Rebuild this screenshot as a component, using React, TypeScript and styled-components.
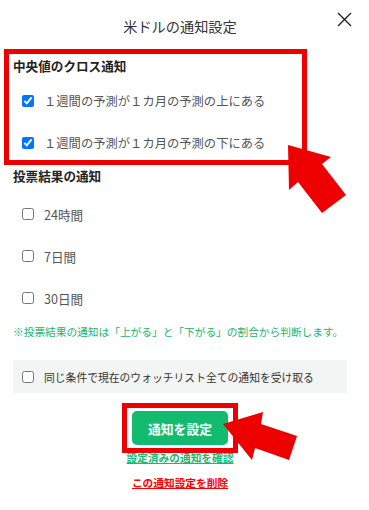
import styled, { createGlobalStyle } from "styled-components";

const GlobalStyle = createGlobalStyle`
    body {
        margin: 0;
        background: #fff;
        font-family: "Noto Sans CJK JP", "Noto Sans", sans-serif;
    }
`

const RED = "#ec0000";
const GREEN = "#12bb6f";

const Page = styled.div`
    position: relative;
    width: 369px;
    height: 510px;
    padding: 0 22px 0 13px;
    box-sizing: border-box;
    overflow: hidden;
`

const Header = styled.header`
    height: 49px;
    padding-top: 3px;
    box-sizing: border-box;
    display: flex;
    align-items: center;
    justify-content: center;
`

const Title = styled.h1`
    margin: 0;
    font-size: 14.2px;
    font-weight: 400;
    color: #333;
`

const CloseButton = styled.button`
    position: absolute;
    top: 12px;
    right: 17px;
    width: 15px;
    height: 15px;
    padding: 0;
    border: none;
    background: none;
    display: flex;
`

const Highlight = styled.section`
    margin-left: -9px;
    width: 303px;
    border: 5px solid ${RED};
    padding: 1px 4px 5px;
    box-sizing: border-box;
`

const SectionTitle = styled.h2`
    margin: 0;
    font-size: 12.6px;
    line-height: 22px;
    font-weight: 700;
    color: #222;
`

const OptionList = styled.div`
    display: flex;
    flex-direction: column;
    gap: 18px;
    margin-top: ${(props: { $top: number }) => props.$top}px;
`

const Option = styled.label`
    height: 24px;
    padding-left: 9px;
    display: flex;
    align-items: center;
    gap: 10px;
    font-size: ${(props: { $size: number }) => props.$size}px;
    color: #555;
`

const Check = styled.input.attrs({ type: "checkbox" })`
    width: 12px;
    height: 12px;
    margin: 0;
    flex-shrink: 0;
`

const Note = styled.p`
    margin: 14px 0 0;
    font-size: 10.7px;
    line-height: 16px;
    color: #17b56c;
    white-space: nowrap;
`

const WatchBox = styled.label`
    margin-top: 20px;
    height: 33px;
    padding-left: 9px;
    display: flex;
    align-items: center;
    gap: 10px;
    background: #f3f5f5;
    font-size: 10.8px;
    color: #333;
    white-space: nowrap;
`

const Actions = styled.div`
    margin-top: 10px;
    display: flex;
    flex-direction: column;
    align-items: center;
`

const ButtonFrame = styled.div`
    border: 5px solid ${RED};
    padding: 3px 5px;
    display: flex;
`

const SubmitButton = styled.button`
    width: 96px;
    height: 34px;
    border: none;
    border-radius: 5px;
    background: ${GREEN};
    color: #fff;
    font-family: inherit;
    font-size: 12.8px;
    font-weight: 700;
`

const TextLink = styled.a`
    margin-top: ${(props: { $top: number; $color: string }) => props.$top}px;
    font-size: 10.7px;
    line-height: 12px;
    font-weight: 700;
    color: ${(props) => props.$color};
    text-decoration: underline;
`

const Annotation = styled.svg`
    position: absolute;
    top: 0;
    left: 0;
    pointer-events: none;
`

const App = () => {
    return (
        <Page>
            <GlobalStyle />
            <Header>
                <Title>米ドルの通知設定</Title>
                <CloseButton aria-label="閉じる">
                    <svg width="15" height="15" viewBox="0 0 15 15">
                        <path d="M1 1 L14 14 M14 1 L1 14" stroke="#222" strokeWidth="1.4" />
                    </svg>
                </CloseButton>
            </Header>

            <Highlight>
                <SectionTitle>中央値のクロス通知</SectionTitle>
                <OptionList $top={12}>
                    <Option $size={12.3}>
                        <Check defaultChecked />
                        １週間の予測が１カ月の予測の上にある
                    </Option>
                    <Option $size={12.3}>
                        <Check defaultChecked />
                        １週間の予測が１カ月の予測の下にある
                    </Option>
                </OptionList>
            </Highlight>

            <section>
                <SectionTitle>投票結果の通知</SectionTitle>
                <OptionList $top={15}>
                    <Option $size={12.6}>
                        <Check />
                        24時間
                    </Option>
                    <Option $size={12.6}>
                        <Check />
                        7日間
                    </Option>
                    <Option $size={12.6}>
                        <Check />
                        30日間
                    </Option>
                </OptionList>
            </section>

            <Note>※投票結果の通知は「上がる」と「下がる」の割合から判断します。</Note>

            <WatchBox>
                <Check />
                同じ条件で現在のウォッチリスト全ての通知を受け取る
            </WatchBox>

            <Actions>
                <ButtonFrame>
                    <SubmitButton>通知を設定</SubmitButton>
                </ButtonFrame>
                <TextLink href="#" $top={-1} $color={GREEN}>設定済みの通知を確認</TextLink>
                <TextLink href="#" $top={13} $color="#f00">この通知設定を削除</TextLink>
            </Actions>

            <Annotation width="369" height="510" viewBox="0 0 369 510">
                <polygon
                    points="288,145 331,157 322,164 346,195 322,213 298,182 289,190"
                    fill={RED}
                />
                <polygon
                    points="223,424 263,412 261,424 297,436 289,460 255,448 252,460"
                    fill={RED}
                />
            </Annotation>
        </Page>
    )
}

export default App;
